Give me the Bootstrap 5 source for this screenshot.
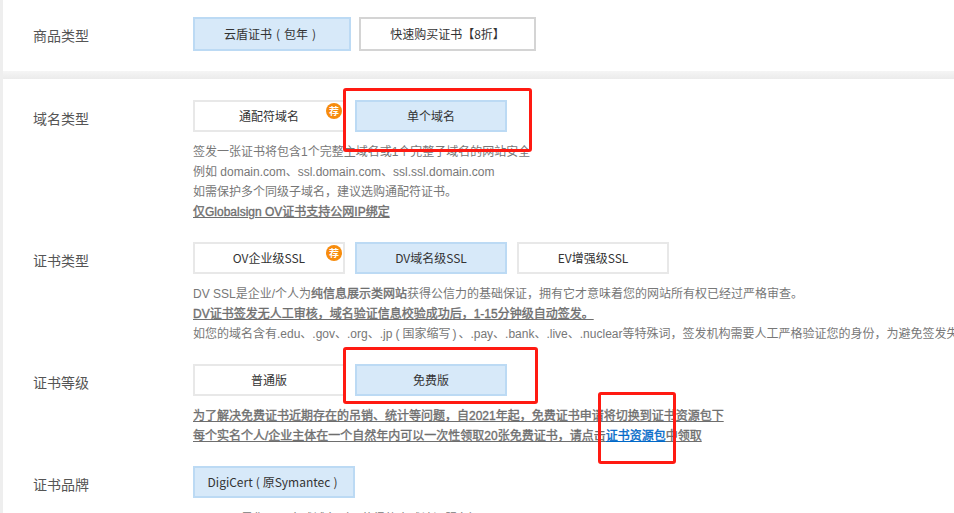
<!DOCTYPE html>
<html lang="zh"><head><meta charset="utf-8">
<link rel="stylesheet" href="https://cdn.jsdelivr.net/npm/bootstrap@5.3.0/dist/css/bootstrap.min.css">
<style>
html,body{height:513px;overflow:hidden}
body{background:#eee;padding-left:3px;font-family:"Noto Sans CJK SC","Liberation Sans",sans-serif;font-size:12px;color:#666}
.sec-a{height:71px;background:#fff;padding:17px 0 0 30px}
.sec-gap{height:8px;background:linear-gradient(#f5f5f5,#ebebeb)}
.sec-b{height:434px;background:#fff;padding:21px 0 0 30px;overflow:hidden}
.lbl{width:160px;flex:none;font-size:14px;color:#555;line-height:20px;padding-top:8px}
.opt{height:32px;width:152px;border:2px solid #e8e8e8;background:#fff;color:#333;font-size:12px;display:flex;align-items:center;justify-content:center;position:relative;flex:none;white-space:nowrap}
.opt.on{background:#d7e9f9;border:2px solid #bcdaf4}
.opt.one{height:34px;width:158px}.opt.two{height:34px;width:177px;border-color:#d4d4d4}
.opt.wide{width:162px}
.opts{gap:10px}.opts.first{gap:8px}
.tip{position:absolute;right:1px;top:1px;width:16px;height:16px;border-radius:50%;background:#f78c0d;color:#fff;font-size:10px;line-height:16px;text-align:center;font-weight:700}
.desc{margin-top:10px;line-height:20px;white-space:nowrap;color:#777;width:760px;font-family:"Liberation Sans","Noto Sans CJK SC",sans-serif}
.desc b,.desc a,.desc strong{font-weight:400;-webkit-text-stroke:.35px currentColor}
.desc b,.desc a{text-decoration:underline}
.desc b,.desc strong{color:#6e6e6e}.desc a{color:#0068c8}
.pn{display:inline-block;width:12px;text-align:center}
.pn.nar{width:10px}.pn.sm{width:8px}
.r2{height:142px}.r3{height:122px}.r4{height:102px}
.last{margin-top:11px}
.ann{position:absolute;border:3px solid #ff1a12;border-radius:3px;pointer-events:none}
.ann-a{left:343px;top:88px;width:189px;height:64px}
.ann-b{left:343px;top:347px;width:195px;height:57px}
.ann-c{left:598px;top:392px;width:78px;height:72px}
</style></head><body>
<div class="sec-a d-flex">
<div class="lbl">商品类型</div>
<div class="d-flex opts first"><div class="opt one on"><span>云盾证书<span class="pn">(</span>包年<span class="pn">)</span></span></div><div class="opt two">快速购买证书【8折】</div></div>
</div>
<div class="sec-gap"></div>
<div class="sec-b">
<div class="d-flex r2"><div class="lbl">域名类型</div><div>
<div class="d-flex opts"><div class="opt">通配符域名<span class="tip">荐</span></div><div class="opt on">单个域名</div></div>
<div class="desc">签发一张证书将包含1个完整主域名或1个完整子域名的网站安全<br>例如 domain.com、ssl.domain.com、ssl.ssl.domain.com<br>如需保护多个同级子域名，建议选购通配符证书。<br><b>仅Globalsign OV证书支持公网IP绑定</b></div>
</div></div>
<div class="d-flex r3"><div class="lbl">证书类型</div><div>
<div class="d-flex opts"><div class="opt">OV企业级SSL<span class="tip">荐</span></div><div class="opt on">DV域名级SSL</div><div class="opt">EV增强级SSL</div></div>
<div class="desc">DV SSL是企业/个人为<strong>纯信息展示类网站</strong>获得公信力的基础保证，拥有它才意味着您的网站所有权已经过严格审查。<br><b>DV证书签发无人工审核，域名验证信息校验成功后，1-15分钟级自动签发。</b><br>如您的域名含有.edu、.gov、.org、.jp<span class="pn nar">(</span>国家缩写<span class="pn sm">)</span>、.pay、.bank、.live、.nuclear等特殊词，签发机构需要人工严格验证您的身份，为避免签发失败</div>
</div></div>
<div class="d-flex r4"><div class="lbl">证书等级</div><div>
<div class="d-flex opts"><div class="opt">普通版</div><div class="opt on">免费版</div></div>
<div class="desc"><b>为了解决免费证书近期存在的吊销、统计等问题，自2021年起，免费证书申请将切换到证书资源包下</b><br><b>每个实名个人/企业主体在一个自然年内可以一次性领取20张免费证书，请点击<a href="#">证书资源包</a>中领取</b></div>
</div></div>
<div class="d-flex"><div class="lbl">证书品牌</div><div>
<div class="d-flex opts"><div class="opt wide on"><span>DigiCert<span class="pn nar">(</span>原Symantec<span class="pn nar">)</span></span></div></div>
<div class="desc last">　　　　是您用于全球域名（可获得的全球认证服务）</div>
</div></div>
</div>
<div class="ann ann-a"></div>
<div class="ann ann-b"></div>
<div class="ann ann-c"></div>
</body></html>
